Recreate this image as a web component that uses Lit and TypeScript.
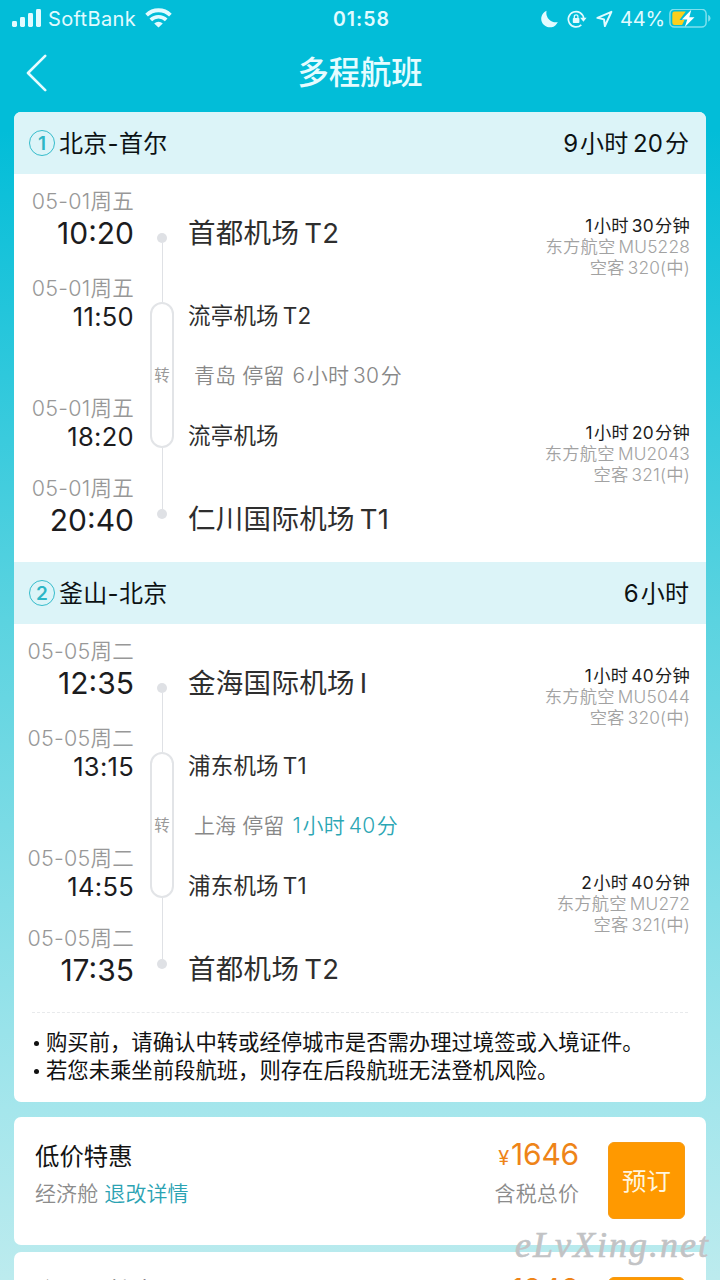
import { LitElement, html, css } from "lit";
import { customElement, property } from "lit/decorators.js";

interface Flight { duration: string; code: string; plane: string; }
interface Stop { date: string; time: string; station: string; }
interface Journey {
  index: number; route: string; total: string;
  stops: Stop[]; stay: string; stayTime: string; shortStay: boolean;
  flights: Flight[];
}

const journeys: Journey[] = [
  {
    index: 1, route: "北京-首尔", total: "9小时20分",
    stops: [
      { date: "05-01周五", time: "10:20", station: "首都机场T2" },
      { date: "05-01周五", time: "11:50", station: "流亭机场T2" },
      { date: "05-01周五", time: "18:20", station: "流亭机场" },
      { date: "05-01周五", time: "20:40", station: "仁川国际机场T1" },
    ],
    stay: "青岛 停留", stayTime: "6小时30分", shortStay: false,
    flights: [
      { duration: "1小时30分钟", code: "东方航空MU5228", plane: "空客320(中)" },
      { duration: "1小时20分钟", code: "东方航空MU2043", plane: "空客321(中)" },
    ],
  },
  {
    index: 2, route: "釜山-北京", total: "6小时",
    stops: [
      { date: "05-05周二", time: "12:35", station: "金海国际机场I" },
      { date: "05-05周二", time: "13:15", station: "浦东机场T1" },
      { date: "05-05周二", time: "14:55", station: "浦东机场T1" },
      { date: "05-05周二", time: "17:35", station: "首都机场T2" },
    ],
    stay: "上海 停留", stayTime: "1小时40分", shortStay: true,
    flights: [
      { duration: "1小时40分钟", code: "东方航空MU5044", plane: "空客320(中)" },
      { duration: "2小时40分钟", code: "东方航空MU272", plane: "空客321(中)" },
    ],
  },
];

/* Splits mixed text into runs so that Latin and Han are spaced apart a little. */
const mixed = (text: string) =>
  text.split(/([A-Za-z0-9]+)/).filter(Boolean).map((run, i, all) => {
    if (!/^[A-Za-z0-9]/.test(run)) return run;
    const before = i > 0 && /[\u4e00-\u9fff]$/.test(all[i - 1]);
    const after = i < all.length - 1 && /^[\u4e00-\u9fff]/.test(all[i + 1]);
    return html`<span class="lat ${before ? "b" : ""} ${after ? "a" : ""}">${run}</span>`;
  });

const runs = css`
  .lat.b { margin-left: 0.18em; }
  .lat.a { margin-right: 0.07em; }
`;

@customElement("status-bar")
class StatusBar extends LitElement {
  static styles = css`
    :host { display: grid; grid-template-columns: 1fr auto 1fr; align-items: center; height: 37px; padding: 0 9px 0 12px; color: #e2fbff; }
    svg { display: block; flex: none; }
    .left, .right { display: flex; align-items: center; }
    .right { justify-content: flex-end; }
    .carrier { font-size: 20px; font-weight: 400; margin: 0 9px 0 7px; letter-spacing: 0.35px; }
    .clock { font-size: 19.500px; font-weight: 600; letter-spacing: 1px; }
    .pct { font-size: 20px; letter-spacing: -0.2px; margin: 0 4px 0 7px; }
    .moon { margin-right: 9px; }
    .lock { margin-right: 9px; }
  `;
  render() {
    return html`
      <div class="left">
        <svg width="29" height="19" viewBox="0 0 29 19" fill="currentColor">
          <rect x="0" y="12" width="5" height="6" rx="1.4"/><rect x="8" y="8" width="5" height="10" rx="1.4"/>
          <rect x="16" y="4" width="5" height="14" rx="1.4"/><rect x="24" y="0" width="5" height="18" rx="1.4"/>
        </svg>
        <span class="carrier">SoftBank</span>
        <svg width="27" height="22" viewBox="0 0 27 22" fill="none" stroke="currentColor">
          <path d="M1.600 7.100a17 17 0 0 1 23.800 0" stroke-width="3.800"/>
          <path d="M5.800 11.900a11 11 0 0 1 15.400 0" stroke-width="3.700"/>
          <path d="M13.500 19.600 9.200 15.400a6.200 6.200 0 0 1 8.600 0Z" fill="currentColor" stroke="none"/>
        </svg>
      </div>
      <span class="clock">01:58</span>
      <div class="right">
        <svg class="moon" width="17" height="18" viewBox="0 0 17 18" fill="currentColor"><path d="M5.600.8A9.300 9.300 0 0 0 16.800 12 8.600 8.600 0 1 1 5.600.8Z"/></svg>
        <svg class="lock" width="20" height="18" viewBox="0 0 20 18" fill="none" stroke="currentColor">
          <path d="M14.300 14.900a7.700 7.700 0 1 1 2.400-6.600" stroke-width="1.700"/>
          <path d="M13.200 7.700h6.400l-3.200 4Z" fill="currentColor" stroke="none"/>
          <rect x="5.800" y="8" width="6.600" height="5" rx=".8" fill="currentColor" stroke="none"/>
          <path d="M7.300 8.300V6.600a1.800 1.800 0 0 1 3.600 0v1.700" stroke-width="1.300"/>
        </svg>
        <svg width="17" height="18" viewBox="0 0 17 18" fill="none" stroke="currentColor" stroke-width="2" stroke-linejoin="round"><path d="M15.400 1.800 1.400 7.800l6.600 1.600.9 6.600Z"/></svg>
        <span class="pct">44%</span>
        <svg width="42" height="20" viewBox="0 0 42 20" fill="none">
          <rect x=".9" y=".2" width="36.200" height="17.800" rx="4.600" stroke="#7fe0ee" stroke-width="1.500"/>
          <path d="M39.200 5.800c3 1.400 3 5.600 0 7Z" fill="#7fe0ee"/>
          <path d="M5.500 2.500h11.300L10.500 11h5l-2.400 5H5.500A2.200 2.200 0 0 1 3.300 13.800V4.700A2.200 2.200 0 0 1 5.500 2.500Z" fill="#fccf1c"/>
          <path d="M22.300.8 12.900 10.400h5.400L15.800 18 25.500 8.200h-5.200Z" fill="#fff"/>
        </svg>
      </div>`;
  }
}

@customElement("journey-section")
class JourneySection extends LitElement {
  @property({ attribute: false }) data!: Journey;
  static styles = [runs, css`
    :host { display: block; }
    .head { display: flex; align-items: center; height: 62px; padding: 0 17px 0 15px; background: #dcf4f8; color: #0c1214; font-size: 24px; letter-spacing: 0.3px; }
    .num { box-sizing: border-box; width: 26px; height: 26px; border: 1px solid #35bccb; border-radius: 50%; margin-right: 4px; display: flex; align-items: center; justify-content: center; font-size: 19px; font-weight: 600; color: #2db6c6; letter-spacing: 0; }
    .route, .total { padding-bottom: 4px; }
    .total { margin-left: auto; margin-right: -0.3px; }
    .body { display: grid; grid-template-columns: 120px 56px 1fr auto; height: 388px; }
    .times, .stations { display: flex; flex-direction: column; }
    .times { padding-top: 13px; align-items: flex-end; white-space: nowrap; }
    .date { height: 28px; line-height: 28px; font-size: 21.500px; font-weight: 350; letter-spacing: 0.25px; color: #989898; }
    .time { line-height: 36px; height: 38px; font-size: 30px; color: #1c1c1e; margin-bottom: 21px; }
    .time.minor { line-height: 30px; height: 30px; font-size: 25.500px; letter-spacing: 0.3px; margin-bottom: 62px; }
    .time.second { margin-bottom: 22px; }
    .line { display: flex; flex-direction: column; align-items: center; padding-top: 59px; }
    .dot { width: 10px; height: 10px; border-radius: 50%; background: #dfe1e5; }
    .seg { width: 1px; height: 59px; background: #dfe1e5; }
    .seg.long { height: 61px; }
    .pill { box-sizing: border-box; width: 24px; height: 146px; border: 2px solid #e2e4e7; border-radius: 12px; display: flex; align-items: center; justify-content: center; font-size: 15.500px; color: #9a9a9a; padding-bottom: 2px; }
    .stations { white-space: nowrap; color: #2e2e2e; padding-top: 41px; margin-left: -2px; }
    .st { font-size: 27.500px; line-height: 36px; height: 36px; letter-spacing: 0.3px; margin-bottom: 50px; }
    .st.minor { font-size: 22.500px; line-height: 30px; height: 28px; letter-spacing: 0.2px; margin-bottom: 31px; }
    .st.second { margin-bottom: 52px; }
    .stay { font-size: 21px; font-weight: 350; color: #888; line-height: 32px; height: 30px; padding-left: 6px; margin-bottom: 31px; letter-spacing: 0.1px; }
    .stay-time { margin-left: 2px; letter-spacing: 0.25px; }
    .warn { color: #2ba6b4; }
    .flights { padding: 41px 16px 0 0; display: flex; flex-direction: column; gap: 144px; text-align: right; font-size: 17.300px; line-height: 21px; letter-spacing: 0.2px; }
    .flight { height: 63px; color: #a2a2a2; font-weight: 350; }
    .dur { color: #1c1c1c; font-weight: 400; }
  `];
  render() {
    const d = this.data;
    const minor = (i: number) => `${i === 1 || i === 2 ? "minor" : ""} ${i === 2 ? "second" : ""}`;
    const station = (i: number) => html`<div class="st ${minor(i)}">${mixed(d.stops[i].station)}</div>`;
    return html`
      <div class="head"><span class="num">${d.index}</span><span class="route">${d.route}</span><span class="total">${mixed(d.total)}</span></div>
      <div class="body">
        <div class="times">${d.stops.map((s, i) => html`<div class="date">${s.date}</div><div class="time ${minor(i)}">${s.time}</div>`)}</div>
        <div class="line"><i class="dot"></i><i class="seg"></i><span class="pill">转</span><i class="seg long"></i><i class="dot"></i></div>
        <div class="stations">
          ${station(0)}${station(1)}
          <div class="stay">${d.stay} <span class="stay-time ${d.shortStay ? "warn" : ""}">${mixed(d.stayTime)}</span></div>
          ${station(2)}${station(3)}
        </div>
        <div class="flights">${d.flights.map((f) => html`
          <div class="flight"><div class="dur">${mixed(f.duration)}</div><div>${mixed(f.code)}</div><div>${mixed(f.plane)}</div></div>`)}</div>
      </div>`;
  }
}

@customElement("fare-card")
class FareCard extends LitElement {
  @property() name = "";
  @property() price = "";
  static styles = css`
    :host { display: flex; box-sizing: border-box; height: 128px; background: #fff; border-radius: 7px; padding: 24px 21px 0 21px; }
    .info { flex: 1; }
    .name { font-size: 24.400px; line-height: 30px; color: #141414; }
    .sub { font-size: 21px; font-weight: 350; line-height: 28px; color: #8c8c8c; margin-top: 9px; letter-spacing: 0.1px; }
    .link { color: #2ba3b3; }
    .amount { text-align: right; margin-right: 29px; }
    .price { display: flex; justify-content: flex-end; align-items: baseline; font-size: 30px; line-height: 27px; height: 30px; color: #ee8418; letter-spacing: -0.2px; }
    .yen { font-size: 20px; margin-right: 2px; }
    .book { box-sizing: border-box; width: 77px; height: 77px; margin-top: 1px; padding-bottom: 3px; border-radius: 6px; background: #ff9900; border: 1px solid #f79a12; color: #fff6df; font-size: 24.400px; display: flex; align-items: center; justify-content: center; }
  `;
  render() {
    return html`
      <div class="info"><div class="name">${this.name}</div><div class="sub">经济舱 <span class="link">退改详情</span></div></div>
      <div class="amount"><div class="price"><span class="yen">¥</span>${this.price}</div><div class="sub">含税总价</div></div>
      <div class="book">预订</div>`;
  }
}

@customElement("app-root")
class AppRoot extends LitElement {
  static styles = css`
    :host { display: block; position: relative; box-sizing: border-box; height: 1280px; overflow: hidden;
      font-family: Inter, "Noto Sans CJK SC", sans-serif; text-autospace: no-autospace;
      background: linear-gradient(180deg, #02bdd8 0, #02bdd8 130px, #5bd3e0 620px, #a5e6ec 1110px, #bcebee 1280px); }
    .nav { display: grid; grid-template-columns: 1fr auto 1fr; align-items: center; height: 75px; padding: 0 26px; box-sizing: border-box; padding-bottom: 3px; color: #e6fcff; }
    .nav h1 { margin: 0; font-size: 31.300px; font-weight: 500; line-height: 40px; }
    .back { display: block; }
    main { padding: 0 14px; }
    .card { background: #fff; border-radius: 7px; overflow: hidden; margin-bottom: 15px; height: 990px; }
    .notes { margin: 0 18px; padding: 15px 0 0; border-top: 1px dashed #e8eaec; font-size: 21.350px; line-height: 28px; color: #111; list-style: none; }
    .notes li { display: flex; align-items: center; }
    .notes li::before { content: ""; width: 5px; height: 5px; border-radius: 50%; background: #111; margin: 3px 7px 0 2px; }
    .fares { display: flex; flex-direction: column; gap: 7px; }
    .mark { position: absolute; right: 10px; top: 1225px; font: italic 36px/40px "Liberation Serif", serif; color: #c2c3c5; -webkit-text-stroke: 0.6px #c2c3c5; letter-spacing: 2px; }
  `;
  render() {
    return html`
      <status-bar></status-bar>
      <div class="nav">
        <svg class="back" width="21" height="38" viewBox="0 0 21 38" fill="none" stroke="currentColor" stroke-width="2.600" stroke-linecap="round" stroke-linejoin="round"><path d="M19.200 1.800 2 19l17.200 17.200"/></svg>
        <h1>多程航班</h1>
      </div>
      <main>
        <div class="card">
          ${journeys.map((j) => html`<journey-section .data=${j}></journey-section>`)}
          <ul class="notes">
            <li>购买前，请确认中转或经停城市是否需办理过境签或入境证件。</li>
            <li>若您未乘坐前段航班，则存在后段航班无法登机风险。</li>
          </ul>
        </div>
        <div class="fares">
          <fare-card name="低价特惠" price="1646"></fare-card>
          <fare-card name="会员日特惠" price="1848"></fare-card>
        </div>
      </main>
      <div class="mark">eLvXing.net</div>`;
  }
}
